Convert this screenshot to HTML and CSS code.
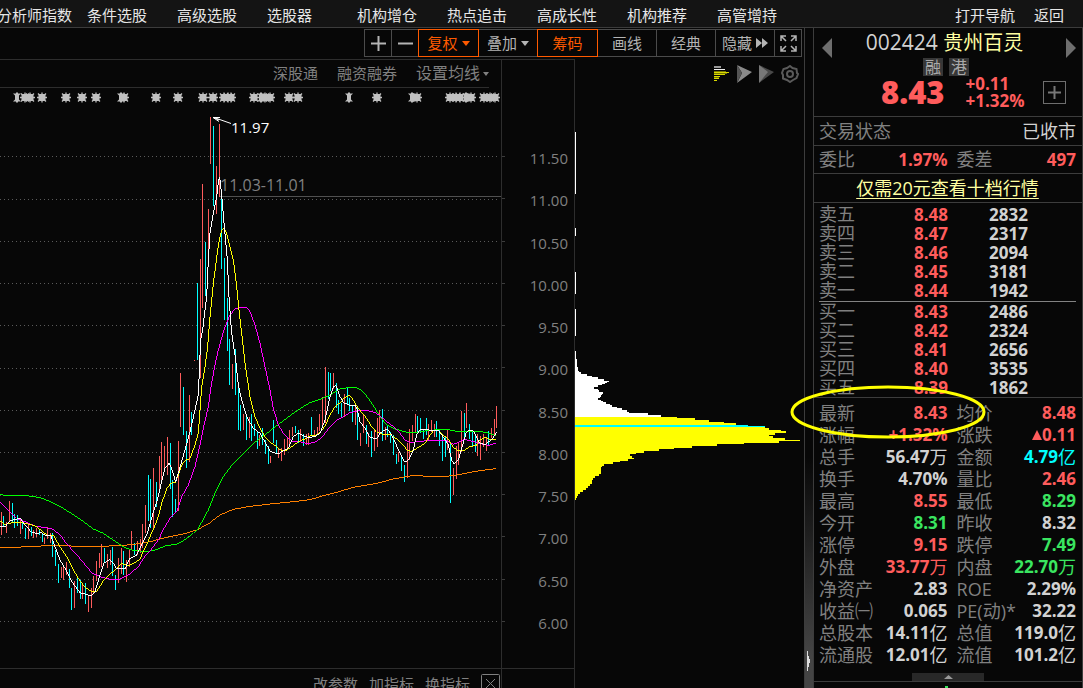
FILE: index.html
```html
<!DOCTYPE html>
<html lang="zh-CN">
<head>
<meta charset="utf-8">
<title>贵州百灵 002424</title>
<link rel="stylesheet" href="styles.css">
</head>
<body>
<header class="topbar">
  <nav class="menu">
    <a href="#">分析师指数</a><a href="#">条件选股</a><a href="#">高级选股</a><a href="#">选股器</a><a href="#">机构增仓</a><a href="#">热点追击</a><a href="#">高成长性</a><a href="#">机构推荐</a><a href="#">高管增持</a>
  </nav>
  <nav class="actions"><a href="#">打开导航</a><a href="#">返回</a></nav>
</header>
<div class="workspace">
  <main class="board">
    <div class="toolbar">
      <button class="tool small" aria-label="放大"><svg width="15" height="15" viewBox="0 0 15 15"><path d="M7.500 0V15M0 7.500H15" stroke="#b4b4b4" stroke-width="2"/></svg></button>
      <button class="tool small" aria-label="缩小"><svg width="15" height="15" viewBox="0 0 15 15"><path d="M0 7.500H15" stroke="#b4b4b4" stroke-width="2"/></svg></button>
      <button class="tool active">复权<svg width="8" height="5" viewBox="0 0 8 5"><path d="M0 0H8L4 5Z" fill="#ff5a00"/></svg></button>
      <button class="tool">叠加<svg width="8" height="5" viewBox="0 0 8 5"><path d="M0 0H8L4 5Z" fill="#b4b4b4"/></svg></button>
      <button class="tool active">筹码</button>
      <button class="tool">画线</button>
      <button class="tool">经典</button>
      <button class="tool">隐藏<svg width="12" height="10" viewBox="0 0 12 10"><path d="M0 0L6 5L0 10ZM6 0L12 5L6 10Z" fill="#b4b4b4"/></svg></button>
      <button class="tool small" aria-label="全屏"><svg width="17" height="17" viewBox="0 0 17 17" fill="none" stroke="#b4b4b4" stroke-width="1.500"><path d="M1 6V1H6M1 1L6 6M11 1H16V6M16 1L11 6M1 11V16H6M1 16L6 11M16 11V16H11M16 16L11 11"/></svg></button>
    </div>
    <div class="panes">
      <section class="kline">
        <div class="subbar">
          <button>深股通</button><button>融资融券</button><button class="ma">设置均线<svg width="6" height="4" viewBox="0 0 6 4"><path d="M0 0H6L3 4Z" fill="#808080"/></svg></button>
        </div>
        <svg class="plot" viewBox="0 88 501 580" preserveAspectRatio="xMinYMin meet" role="img" aria-label="K线图">
          <defs>
            <g id="s"><path d="M-5 0H5M0 -5V5M-4 -4L4 4M-4 4L4 -4" stroke="#c0c0c0" stroke-width="1.300"/><rect x="-3.500" y="-3.500" width="7" height="7" rx="1" fill="#c0c0c0"/></g>
            <path id="n" d="M-1 -5H1V-4H4L2 -2V2L4 4H1V5H-1V4H-4L-2 2V-2L-4 -4H-1Z" fill="#c0c0c0"/>
          </defs>
          <path d="M0 87.500H489" stroke="#2d2d2d"/>
          <g>
            <use href="#n" x="17" y="97.500"/><use href="#s" x="25" y="97.500"/><use href="#s" x="30" y="97.500"/><use href="#s" x="42" y="97.500"/><use href="#s" x="66" y="97.500"/><use href="#s" x="82" y="97.500"/><use href="#s" x="96" y="97.500"/><use href="#n" x="121" y="97.500"/><use href="#s" x="124" y="97.500"/><use href="#s" x="156" y="97.500"/><use href="#s" x="178" y="97.500"/><use href="#s" x="203" y="97.500"/><use href="#s" x="213" y="97.500"/><use href="#s" x="224" y="97.500"/><use href="#s" x="228" y="97.500"/><use href="#s" x="231" y="97.500"/><use href="#s" x="254" y="97.500"/><use href="#n" x="261" y="97.500"/><use href="#s" x="265" y="97.500"/><use href="#s" x="270" y="97.500"/><use href="#s" x="289" y="97.500"/><use href="#s" x="298" y="97.500"/><use href="#n" x="349" y="97.500"/><use href="#s" x="377" y="97.500"/><use href="#n" x="412" y="97.500"/><use href="#s" x="417" y="97.500"/><use href="#s" x="450" y="97.500"/><use href="#s" x="456" y="97.500"/><use href="#s" x="460" y="97.500"/><use href="#n" x="466" y="97.500"/><use href="#s" x="471" y="97.500"/><use href="#s" x="484" y="97.500"/><use href="#s" x="490" y="97.500"/><use href="#s" x="495" y="97.500"/>
          </g>
          <path shape-rendering="crispEdges" d="M0 156.500H500M0 199.500H500M0 241.500H500M0 283.500H500M0 325.500H500M0 368.500H500M0 410.500H500M0 452.500H500M0 495.500H500M0 537.500H500M0 579.500H500M0 621.500H500" stroke="#5a5a5a" stroke-dasharray="1 3"/>
          <path d="M220 196.500H501" stroke="#505050" shape-rendering="crispEdges"/>
          <g shape-rendering="crispEdges" fill="none" stroke-width="3">
            <g transform="translate(0 470) scale(.333333)">
              <path class="up" d="M4.500 126V194M19.500 155V188M28.500 93V152M61.500 147V192M85.500 165V206M100.500 180V203M109.500 175V201M133.500 203V221M142.500 171V206M151.500 190V218M184.500 291V324M190.500 290V330M199.500 276V315M223.500 333V413M247.500 338V388M265.500 375V425M274.500 353V413M280.500 317V372M289.500 273V333M298.500 248V293M304.500 222V292M322.500 252V293M331.500 240V285M355.500 263V338M364.500 235V311M379.500 270V335M388.500 238V292M394.500 183V238M412.500 213V255M421.500 207V248M427.500 162V235M436.500 105V188"/>
              <path class="down" d="M10.500 138V172M37.500 99V160M43.500 132V173M52.500 135V168M67.500 152V177M76.500 173V206M94.500 170V197M118.500 180V195M127.500 190V216M157.500 190V261M166.500 240V287M175.500 282V338M208.500 297V353M214.500 353V419M232.500 322V370M241.500 330V386M256.500 339V402M313.500 234V280M337.500 231V318M346.500 315V359M370.500 243V315M403.500 220V255M445.500 15V152"/>
              <path class="m250" d="M0 232H60L65 229H120L125 226L210 227L215 229H325L330 226L385 225L425 220L450 215"/>
              <path class="m60" d="M0 74L15 76H70L105 80L130 86L155 97L185 112L210 128L245 151L280 177L310 190L340 210L375 233L400 241L430 244L450 243"/>
              <path class="m20" d="M0 97L30 125L50 145L75 155L105 168L135 173L160 178L185 200L200 222L225 248L250 278L275 308L300 320L330 328L360 327L385 315L415 290L430 265L450 243"/>
              <path class="m10" d="M0 153L15 163L30 160L45 156L75 160L105 167L125 182L140 195L160 196L175 222L200 260L215 290L235 325L255 352L275 365L290 364L310 333L330 313L350 295L365 281L385 287L405 278L420 268L430 243L440 225L450 200"/>
              <path class="m5" d="M0 170H15L30 153L50 147L62 146L75 165L95 187L110 190L125 188L135 196L153 198L165 230L180 270L195 295L215 335L240 368L260 373L272 378L285 365L300 315L312 280L328 269L340 280L350 297L375 296L390 265L410 255L425 225L440 195L450 162"/>
            </g>
            <g transform="translate(150 300) scale(.333333)">
              <path class="up" d="M10.500 504V690M28.500 468V580M34.500 426V540M43.500 438V507M52.500 411V525M85.500 423V632M91.500 219V380M118.500 285V486M133.500 180V183M151.500 -123V233M157.500 -348V24M175.500 -273V-126M181.500 -549V-408M199.500 -402V-258M208.500 -528V-310M247.500 192V267M280.500 342V390M298.500 352V415M328.500 405V438M361.500 468V489M385.500 445V475M394.500 445V483M403.500 417V465M412.500 412V450M418.500 390V435M427.500 381V408M451.500 387V425M469.500 402V435M475.500 400V435"/>
              <path class="down" d="M1.500 538V683M19.500 546V620M61.500 430V567M67.500 540V650M76.500 597V635M100.500 262V405M109.500 393V503M124.500 336V405M142.500 -51V180M166.500 -174V-12M190.500 -522V-282M214.500 -307V-93M223.500 -126V60M232.500 -6V153M238.500 117V255M256.500 147V285M265.500 255V390M271.500 315V393M289.500 348V420M304.500 342V423M313.500 372V408M322.500 395V447M337.500 384V435M346.500 420V462M355.500 438V492M370.500 360V430M379.500 420V458M436.500 378V400M445.500 390V430M460.500 402V438"/>
              <path class="m250" d="M0 725L50 712L100 702L140 690L175 672L210 645L250 628L300 619L370 611L430 605L480 599"/>
              <path class="m60" d="M0 753L20 749L45 738L80 732L100 722L130 700L145 685L175 630L195 580L220 530L250 490L280 462L310 430L340 408L370 385L400 362L430 340L460 320L480 308"/>
              <path class="m20" d="M0 753L25 720L42 685L60 655L80 635L95 590L115 555L135 500L150 435L160 385L175 320L183 260L195 195L205 150L220 95L240 45L255 27L275 22H290L300 35L315 75L330 130L345 200L360 270L370 325L385 375L400 400L415 415L430 425H450L470 430H480"/>
              <path class="m10" d="M0 710L10 688L25 650L35 610L50 567L62 550L77 547L95 495L105 482L120 475L135 435L145 400L155 260L165 200L172 150L180 50L190 -50L205 -165L215 -210L222 -215L230 -200L240 -160L250 -120L260 -40L268 40L275 100L285 190L300 290L315 350L330 385L345 410L362 428L378 438L395 453L410 450L425 440L445 425L465 417L480 408"/>
              <path class="m5" d="M0 672L10 635L22 600L35 545L45 505L57 490L63 500L77 545L92 495L105 450L120 395L135 330L145 285L152 120L158 90L165 30L170 -10L175 -120L180 -200L190 -260L200 -310L205 -355L209 -370L215 -315L222 -230L232 -120L237 -10L244 90L257 180L265 255L275 300L290 350L310 385L330 400L350 435L362 455L385 462L400 452L415 445L430 410L445 400L465 410L480 413"/>
            </g>
            <g transform="translate(310 350) scale(.333333)">
              <path class="up" d="M13.500 240V258M22.500 231V252M28.500 192V242M37.500 142V228M46.500 51V220M70.500 69V118M103.500 132V200M136.500 168V226M151.500 249V288M160.500 195V250M175.500 249V291M193.500 240V303M202.500 204V290M208.500 180V250M226.500 230V270M265.500 305V336M292.500 279V383M298.500 237V330M307.500 225V272M316.500 192V250M355.500 222V270M364.500 210V245M373.500 222V260M412.500 240V300M430.500 354V435M439.500 288V387M445.500 276V345M454.500 183V306M469.500 159V234M502.500 252V318M511.500 258V330M520.500 252V290M529.500 264V303M544.500 234V265M553.500 207V255M559.500 168V234"/>
              <path class="down" d="M4.500 201V255M55.500 66V147M61.500 69V122M79.500 99V174M85.500 150V192M94.500 160V205M112.500 111V165M118.500 145V182M127.500 168V216M142.500 170V270M169.500 225V282M184.500 243V321M217.500 177V273M232.500 228V262M241.500 245V280M250.500 255V315M259.500 312V342M274.500 315V363M283.500 345V396M322.500 198V252M331.500 204V250M340.500 240V267M349.500 204V255M379.500 213V262M388.500 240V288M397.500 258V333M406.500 262V321M421.500 279V459M463.500 189V265M478.500 222V267M487.500 245V287M496.500 255V306M535.500 243V287"/>
              <path class="m250" d="M0 449L40 437L80 427L130 412L200 400L250 387L310 376H330L355 381H380L430 377L470 369L510 362L557 356"/>
              <path class="m60" d="M0 158L25 150L60 135L90 117L120 112L140 113L160 125L175 145L195 175L210 200L230 225L250 235L285 246L320 247L350 242L385 239H415L440 244H500L530 247L545 253L557 257"/>
              <path class="m20" d="M0 280L20 275L40 257L60 230L80 210L100 200L120 188L140 183L160 180L175 182L195 188L210 198L230 215L255 233L270 250L285 270L300 277L330 275L360 270L385 273H410L430 283L445 277L465 268L490 275L515 282L535 286L550 282L558 281"/>
              <path class="m10" d="M0 257H15L30 248L45 228L60 195L75 170L90 158L105 142L118 136L130 150L140 168L155 188L170 205L185 230L200 247L220 253H240L260 267L280 285L290 300L305 304L320 295L345 280L360 255L370 243L385 241L400 255L415 268L430 292L445 303H460L480 290L500 285L510 270L525 262L540 268H557"/>
              <path class="m5" d="M0 262L15 260L30 250L45 210L60 140L70 110L78 107L90 140L100 158L120 166H135L142 180L150 215L165 235L180 262L200 266L210 250L225 240H235L250 265L270 310L285 337L295 330L310 300L320 255L330 240L350 238L365 243L385 241L400 262L415 285L425 330L432 341L445 330L458 285L468 250L478 240L490 243L500 262L510 280L525 284L540 272L550 263L560 245"/>
            </g>
          </g>
          <path d="M214 117.500L231 123.500M213 117.500H220M213 117.500L219 121.500M215 118L219 120" stroke="#fff" fill="none"/>
          <text x="231" y="133" fill="#fff">11.97</text>
          <text class="gap" x="220" y="191" fill="#808080">11.03-11.01</text>
        </svg>
        <footer class="tabs">
          <button>改参数</button><button>加指标</button><button>换指标</button>
          <button class="close" aria-label="关闭"><svg width="19" height="20" viewBox="0 0 19 20" fill="none" stroke="#808080"><rect x=".5" y=".5" width="18" height="19" rx="1"/><path d="M5 5L14 14M14 5L5 14"/></svg></button>
        </footer>
      </section>
      <section class="axis">
        <ol>
          <li>11.50</li><li>11.00</li><li>10.50</li><li>10.00</li><li>9.50</li><li>9.00</li><li>8.50</li><li>8.00</li><li>7.50</li><li>7.00</li><li>6.50</li><li>6.00</li>
        </ol>
        <div class="axis-foot"></div>
      </section>
      <section class="chips">
        <div class="chip-tools">
          <button aria-label="筹码分布"><svg width="15" height="15" viewBox="0 0 15 15" shape-rendering="crispEdges"><path d="M0 .5H7M0 1.500H7" stroke="#999"/><path d="M0 3.500H11" stroke="#eee"/><path d="M0 6.500H15M0 8.500H11M0 10.500H6M0 12.500H5M0 14.500H3" stroke="#d8d800"/><path d="M0 5.500H12M0 7.500H13M0 11.500H5" stroke="#777700"/></svg></button>
          <button aria-label="远期筹码"><svg width="16" height="18" viewBox="0 0 16 18"><path d="M1 0L16 7L1 18L6 8Z" fill="#8a8a8a"/><path d="M1 0L6 8L1 18Z" fill="#555"/></svg></button>
          <button aria-label="近期筹码"><svg width="15" height="18" viewBox="0 0 15 18"><path d="M0 0L15 7L0 18L4 8Z" fill="#484848"/><path d="M0 0L9 7L0 18Z" fill="#777"/></svg></button>
          <button aria-label="设置"><svg width="18" height="18" viewBox="0 0 18 18" fill="none" stroke="#5a5a5a" stroke-width="2"><path d="M9 1L11.500 3L15.500 4L16 8L17 9L15.500 13L12 15L9 17L6 15L2 13.500L2 10L1 8L2.500 4L6 3Z"/><circle cx="9" cy="9" r="3"/></svg></button>
        </div>
        <svg class="profile" viewBox="575 88 229 600" preserveAspectRatio="xMinYMin meet" shape-rendering="crispEdges" role="img" aria-label="筹码分布图">
          <path d="M575.500 132V194M575.500 228V236M575.500 272V294M575.500 309V336" stroke="#fff"/>
          <g transform="translate(500 340) scale(.333333)">
            <path fill="#fff" d="M225 33H228V57H231V81H234V93H237V96H243V102H261V108H276V111H294V117H312V123H327V126H321V129H315V132H306V135H294V141H282V147H294V150H297V156H309V162H306V165H303V171H300V174H294V180H303V183H309V186H318V192H330V195H336V201H351V204H366V210H381V216H387V219H444V225H483V231H225Z"/>
            <path fill="#ff0" d="M225 231H531V234H585V240H627V246H672V249H708V255H744V258H795V264H807V270H843V273H858V279H825V285H807V288H819V294H855V300H900V303H837V309H732V312H651V318H576V324H522V327H477V333H432V339H408V342H390V348H396V354H402V357H384V363H360V366H339V372H312V378H306V381H303V402H297V408H285V414H279V420H276V432H270V438H264V444H258V450H249V456H240V462H234V468H231V474H228V480H225Z"/>
            <path fill="#0ff" d="M225 255H744V258H795V261H225Z"/>
          </g>
        </svg>
      </section>
    </div>
  </main>
  <div class="splitter"><svg width="4" height="20" viewBox="0 0 4 20"><path d="M0 0H1V5H2V8H3V12H2V16H1V20H0Z" fill="#ddd"/></svg></div>
  <aside class="quote">
    <div class="head">
      <div class="title">
        <button aria-label="上一只"><svg width="10" height="20" viewBox="0 0 10 20"><path d="M10 0V20L0 10Z" fill="#6e6e6e"/></svg></button>
        <h1>002424 <b>贵州百灵</b></h1>
        <button aria-label="下一只"><svg width="10" height="20" viewBox="0 0 10 20"><path d="M0 0V20L10 10Z" fill="#6e6e6e"/></svg></button>
      </div>
      <div class="badges"><span>融</span><span>港</span></div>
      <div class="price">
        <strong>8.43</strong>
        <div class="change"><span>+0.11</span><span>+1.32%</span></div>
        <button class="add" aria-label="加自选"><svg width="23" height="23" viewBox="0 0 23 23" fill="none"><rect x=".5" y=".5" width="22" height="22" stroke="#6e6e6e"/><path d="M11.500 5V18M5 11.500H18" stroke="#777" stroke-width="2"/></svg></button>
      </div>
    </div>
    <dl class="strip status"><div><dt>交易状态</dt><dd class="plain">已收市</dd></div></dl>
    <dl class="strip pair"><div><dt>委比</dt><dd class="r">1.97%</dd></div><div><dt>委差</dt><dd class="r">497</dd></div></dl>
    <div class="strip promo"><a href="#">仅需20元查看十档行情</a></div>
    <div class="orders">
      <table>
        <tbody><tr><th scope="row">卖五</th><td>8.48</td><td>2832</td></tr><tr><th scope="row">卖四</th><td>8.47</td><td>2317</td></tr><tr><th scope="row">卖三</th><td>8.46</td><td>2094</td></tr><tr><th scope="row">卖二</th><td>8.45</td><td>3181</td></tr><tr><th scope="row">卖一</th><td>8.44</td><td>1942</td></tr></tbody>
      </table>
      <table class="bids">
        <tbody><tr><th scope="row">买一</th><td>8.43</td><td>2486</td></tr><tr><th scope="row">买二</th><td>8.42</td><td>2324</td></tr><tr><th scope="row">买三</th><td>8.41</td><td>2656</td></tr><tr><th scope="row">买四</th><td>8.40</td><td>3535</td></tr><tr><th scope="row">买五</th><td>8.39</td><td>1862</td></tr></tbody>
      </table>
    </div>
    <dl class="pair facts">
      <div><dt>最新</dt><dd class="r">8.43</dd></div><div><dt>均价</dt><dd class="r">8.48</dd></div>
      <div><dt>涨幅</dt><dd class="r">+1.32%</dd></div><div><dt>涨跌</dt><dd class="r"><svg width="10" height="10" viewBox="0 0 10 10"><path d="M5 0L10 10H0Z" fill="#ff5c5c"/></svg>0.11</dd></div>
      <div><dt>总手</dt><dd>56.47<i>万</i></dd></div><div><dt>金额</dt><dd class="c">4.79<i>亿</i></dd></div>
      <div><dt>换手</dt><dd>4.70%</dd></div><div><dt>量比</dt><dd class="r">2.46</dd></div>
      <div><dt>最高</dt><dd class="r">8.55</dd></div><div><dt>最低</dt><dd class="g">8.29</dd></div>
      <div><dt>今开</dt><dd class="g">8.31</dd></div><div><dt>昨收</dt><dd>8.32</dd></div>
      <div><dt>涨停</dt><dd class="r">9.15</dd></div><div><dt>跌停</dt><dd class="g">7.49</dd></div>
      <div><dt>外盘</dt><dd class="r">33.77<i>万</i></dd></div><div><dt>内盘</dt><dd class="g">22.70<i>万</i></dd></div>
      <div><dt>净资产</dt><dd>2.83</dd></div><div><dt>ROE</dt><dd>2.29%</dd></div>
      <div><dt>收益㈠</dt><dd>0.065</dd></div><div><dt>PE(动)*</dt><dd>32.22</dd></div>
      <div><dt>总股本</dt><dd>14.11<i>亿</i></dd></div><div><dt>总值</dt><dd>119.0<i>亿</i></dd></div>
      <div><dt>流通股</dt><dd>12.01<i>亿</i></dd></div><div><dt>流值</dt><dd>101.2<i>亿</i></dd></div>
    </dl>
    <button class="fold" aria-label="收起"><svg width="9" height="4" viewBox="0 0 9 4"><path d="M4.500 0L9 4H0Z" fill="#999"/></svg></button>
    <div class="trend"><svg width="3" height="2" viewBox="0 0 3 2"><path d="M0 0H3V2H0Z" fill="#3ae560"/></svg></div>
    <svg class="ring" viewBox="0 0 196 54"><ellipse cx="98" cy="27" rx="96" ry="25" fill="none" stroke="#ff0" stroke-width="3"/></svg>
  </aside>
</div>
</body>
</html>
```
FILE: styles.css
```css
* { box-sizing: border-box; }
body {
  margin: 0;
  height: 100vh;
  display: flex;
  flex-direction: column;
  overflow: hidden;
  background: #070707;
  color: #d2d2d2;
  font: 15px/20px "Open Sans", "Noto Sans CJK SC", sans-serif;
}
button {
  margin: 0;
  padding: 0;
  border: 0;
  background: none;
  color: inherit;
  font: inherit;
  white-space: nowrap;
}
svg { display: block; flex: none; }
a { color: inherit; text-decoration: none; }
h1, dl, dd, ol { margin: 0; padding: 0; font-weight: 400; }

.topbar {
  display: flex;
  justify-content: space-between;
  height: 28px;
  flex: none;
  background: #141414;
  border-bottom: 1px solid #3c3c3c;
  color: #e6e6e6;
  line-height: 30px;
}
.menu { display: flex; margin-left: -3px; }
.menu a { width: 90px; white-space: nowrap; }
.actions { display: flex; gap: 19px; padding-right: 19px; }

.workspace { flex: 1; min-height: 0; display: flex; }
.board {
  flex: 1;
  min-width: 0;
  display: flex;
  flex-direction: column;
  border-right: 1px solid #3c3c3c;
}
.toolbar {
  display: flex;
  justify-content: flex-end;
  flex: none;
  height: 31px;
  padding: 1px 2px 2px 0;
}
.tool {
  display: flex;
  align-items: center;
  justify-content: center;
  gap: 4px;
  width: 60px;
  height: 28px;
  margin-left: -1px;
  border: 1px solid #4b4b4b;
  color: #b4b4b4;
}
.tool.small { width: 28px; }
.tool.active {
  position: relative;
  width: 61px;
  border-color: #ff5a00;
  color: #ff5a00;
}

.panes { flex: 1; min-height: 0; display: flex; }
.kline, .axis {
  display: flex;
  flex-direction: column;
  border-top: 1px solid #2d2d2d;
  border-right: 1px solid #2d2d2d;
}
.kline { flex: 1; min-width: 0; }
.subbar {
  display: flex;
  justify-content: flex-end;
  gap: 19px;
  flex: none;
  height: 27px;
  padding-right: 12px;
  color: #808080;
  line-height: 27px;
}
.ma { display: flex; align-items: center; gap: 3px; font-size: 16px; }
.plot { flex: 1; min-height: 0; width: 100%; margin-top: 1px; overflow: visible; font-size: 15px; }
.plot .gap { font-size: 16px; }
.up { stroke: #ff5c5c; }
.down { stroke: #0ff; }
.m5 { stroke: #fff; }
.m10 { stroke: #ff0; }
.m20 { stroke: #f0f; }
.m60 { stroke: #0f0; }
.m250 { stroke: #ff8000; }
.tabs {
  display: flex;
  align-items: flex-start;
  justify-content: flex-end;
  gap: 11px;
  flex: none;
  height: 20px;
  padding: 5px 1px 0 0;
  border-top: 1px solid #2d2d2d;
  color: #808080;
  overflow: hidden;
}

.axis { width: 73px; flex: none; }
.axis ol {
  flex: 1;
  display: flex;
  flex-direction: column;
  justify-content: space-between;
  padding: 87px 0 34px;
  list-style: none;
  color: #808080;
  line-height: 22px;
  text-align: right;
}
.axis li { position: relative; padding-right: 6px; }
.axis li::before {
  content: "";
  position: absolute;
  left: 0;
  top: 9px;
  width: 3px;
  height: 1px;
  background: #3c3c3c;
}
.axis-foot { flex: none; height: 20px; border-top: 1px solid #2d2d2d; }

.chips { width: 229px; flex: none; display: flex; flex-direction: column; }
.chip-tools {
  display: flex;
  align-items: center;
  justify-content: flex-end;
  gap: 7px;
  flex: none;
  height: 29px;
  padding-right: 5px;
}
.profile { flex: 1; min-height: 0; width: 100%; }

.splitter {
  flex: none;
  width: 8px;
  display: flex;
  flex-direction: column;
  justify-content: flex-end;
  padding: 0 0 17px 2px;
  background: linear-gradient(#070707 65%, #444 95%);
}

.quote {
  position: relative;
  flex: none;
  width: 270px;
  border: solid #3c3c3c;
  border-width: 0 1px;
  font-size: 17px;
  font-weight: 700;
}
.head { height: 89px; border-bottom: 1px solid #3c3c3c; }
.title {
  display: flex;
  justify-content: space-between;
  align-items: flex-end;
  height: 30px;
  padding: 0 6px 0 8px;
}
h1 { padding-right: 9px; font-size: 21px; line-height: 30px; }
h1 b { font-size: 20px; font-weight: 400; color: #ffffa0; }
.badges { display: flex; justify-content: center; gap: 6px; padding-right: 4px; }
.badges span {
  width: 20px;
  background: #373737;
  color: #aaa;
  font-size: 16px;
  font-weight: 400;
  line-height: 18px;
  text-align: center;
}
.price {
  display: flex;
  align-items: center;
  height: 32px;
  padding: 0 16px 0 67px;
  color: #ff5c5c;
}
.price strong { font-size: 31px; line-height: 30px; }
.change { display: flex; flex-direction: column; margin-left: 21px; line-height: 17px; }
.add { margin-left: auto; }

dl > div { display: flex; justify-content: space-between; white-space: nowrap; }
dt, th { color: #808080; font-size: 18px; font-weight: 400; text-align: left; }
dd { display: flex; align-items: center; font-weight: 700; }
dd i { font-size: 18px; font-style: normal; font-weight: 400; }
.plain { font-size: 18px; font-weight: 400; }
.r { color: #ff5c5c; }
.g { color: #3ae560; }
.c { color: #0ff; }
.strip {
  padding: 0 6px 0 5px;
  border-bottom: 1px solid #3c3c3c;
  line-height: 28px;
}
.pair {
  display: grid;
  grid-template-columns: 128fr 119fr;
  column-gap: 9px;
}
.strip.pair { line-height: 27px; }
.promo { text-align: center; font-size: 18px; font-weight: 400; color: #ffffa0; }
.promo a { text-decoration: underline; text-underline-offset: 3px; text-decoration-skip-ink: none; }

.orders { padding: 2px 6px 0 5px; border-bottom: 1px solid #3c3c3c; }
table { width: 100%; border-collapse: collapse; table-layout: fixed; line-height: 19px; }
th, td { height: 19px; padding: 0; }
td { color: #ff5c5c; text-align: right; }
td:nth-child(2) { width: 68px; }
td:last-child { width: 128px; padding-right: 48px; color: #d2d2d2; }
.bids { margin-top: 1px; border-top: 1px solid #828282; }
.facts { padding: 4px 6px 7px 5px; line-height: 22px; }
.fold {
  display: flex;
  justify-content: center;
  align-items: center;
  width: 72px;
  height: 8px;
  margin: 0 auto;
  background: #282828;
}
.trend { padding: 4px 0 0 131px; border-top: 1px solid #3c3c3c; }
.ring {
  position: absolute;
  left: -24px;
  top: 357px;
  width: 196px;
  pointer-events: none;
}
```
